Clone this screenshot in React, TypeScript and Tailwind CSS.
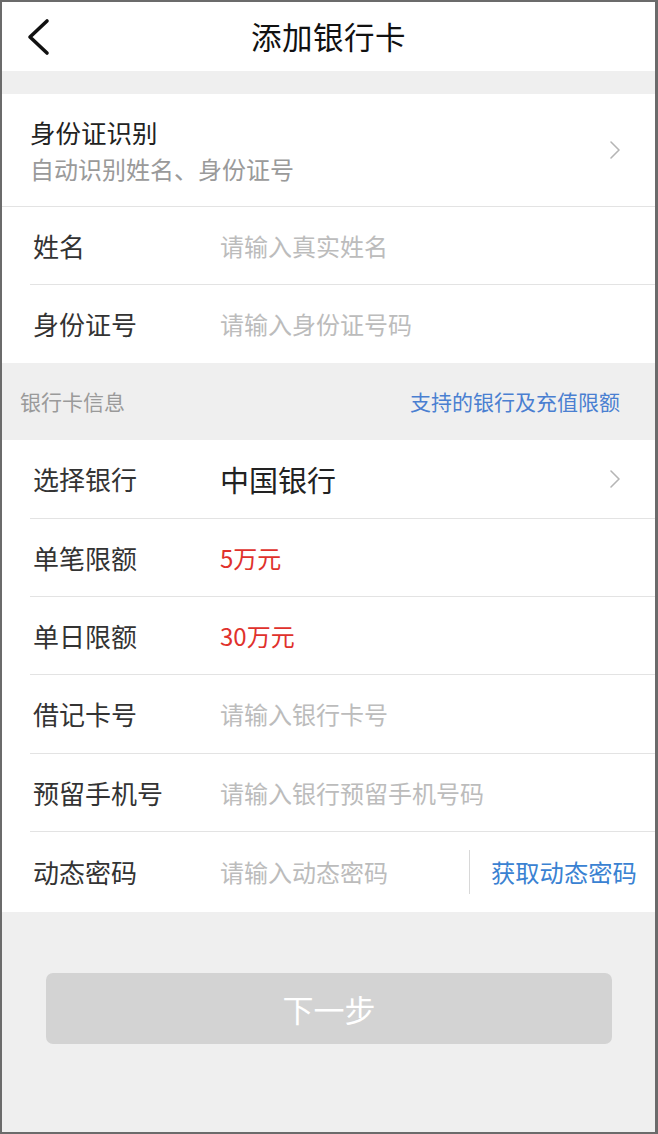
import React from "react";

function Chevron() {
  return (
    <svg width="12" height="20" viewBox="0 0 12 20" className="shrink-0">
      <path d="M2 2 L10 10 L2 18" fill="none" stroke="#b5b5b5" strokeWidth="1.6" strokeLinecap="round" strokeLinejoin="round" />
    </svg>
  );
}

function Row({ label, children, last, h = "h-[78px]" }: { label: string; children?: React.ReactNode; last?: boolean; h?: string }) {
  return (
    <div className="pl-[28px] bg-white">
      <div className={"flex items-center " + h + " " + (last ? "" : "border-b border-[#e3e3e3]")}>
        <div className="w-[190px] pl-[3px] text-[26px] leading-none text-[#333]">{label}</div>
        <div className="flex-1 flex items-center min-w-0">{children}</div>
      </div>
    </div>
  );
}

const ph = "text-[24px] leading-none text-[#bcbcbc]";

export default function App() {
  return (
    <div className="w-[658px] h-[1134px] box-border border-l-2 border-t-2 border-r-[3px] border-b-2 border-[#6b6b6b] bg-[#efefef] font-['Noto_Sans_CJK_SC',sans-serif] overflow-hidden">
      {/* Header */}
      <div className="relative h-[69px] bg-white flex items-center justify-center">
        <svg width="30" height="40" viewBox="0 0 30 40" className="absolute left-[24px] top-[16px]">
          <path d="M21 3 L4 19 L21 35" fill="none" stroke="#111" strokeWidth="3.6" strokeLinecap="round" strokeLinejoin="round" />
        </svg>
        <div className="text-[30.5px] leading-none text-[#111] tracking-[0.5px]">添加银行卡</div>
      </div>
      <div className="h-[23px]" />

      {/* Section 1 */}
      <div className="bg-white">
        <div className="h-[113px] border-b border-[#e3e3e3] flex items-center pl-[28px] pr-[34px]">
          <div className="flex-1 flex flex-col">
            <div className="text-[25.5px] leading-none text-[#222]">身份证识别</div>
            <div className="text-[24px] leading-none text-[#9a9a9a] mt-[12px]">自动识别姓名、身份证号</div>
          </div>
          <Chevron />
        </div>
        <Row label="姓名">
          <span className={ph}>请输入真实姓名</span>
        </Row>
        <Row label="身份证号" last>
          <span className={ph}>请输入身份证号码</span>
        </Row>
      </div>

      {/* Section header */}
      <div className="h-[77px] flex items-center justify-between pl-[18px] pr-[35px]">
        <span className="text-[21px] leading-none text-[#9a9a9a]">银行卡信息</span>
        <span className="text-[21px] leading-none text-[#4a7fd1]">支持的银行及充值限额</span>
      </div>

      {/* Section 2 */}
      <div className="bg-white">
        <Row label="选择银行" h="h-[79px]">
          <span className="flex-1 text-[29px] leading-none text-[#222]">中国银行</span>
          <span className="mr-[34px]"><Chevron /></span>
        </Row>
        <Row label="单笔限额" h="h-[78px]">
          <span className="text-[24px] leading-none text-[#e0312c]">5万元</span>
        </Row>
        <Row label="单日限额" h="h-[78px]">
          <span className="text-[24px] leading-none text-[#e0312c]">30万元</span>
        </Row>
        <Row label="借记卡号" h="h-[79px]">
          <span className={ph}>请输入银行卡号</span>
        </Row>
        <Row label="预留手机号" h="h-[78px]">
          <span className={ph}>请输入银行预留手机号码</span>
        </Row>
        <Row label="动态密码" last h="h-[80px]">
          <span className={"w-[249px] " + ph}>请输入动态密码</span>
          <span className="w-px h-[44px] bg-[#d8d8d8]" />
          <span className="ml-[21px] text-[24.3px] leading-none text-[#3a82d2]">获取动态密码</span>
        </Row>
      </div>

      {/* Button */}
      <div className="pt-[61px] pl-[44px]">
        <div className="w-[566px] h-[71px] rounded-[7px] bg-[#d3d3d3] flex items-center justify-center">
          <span className="text-[31px] leading-none text-white">下一步</span>
        </div>
      </div>
    </div>
  );
}
